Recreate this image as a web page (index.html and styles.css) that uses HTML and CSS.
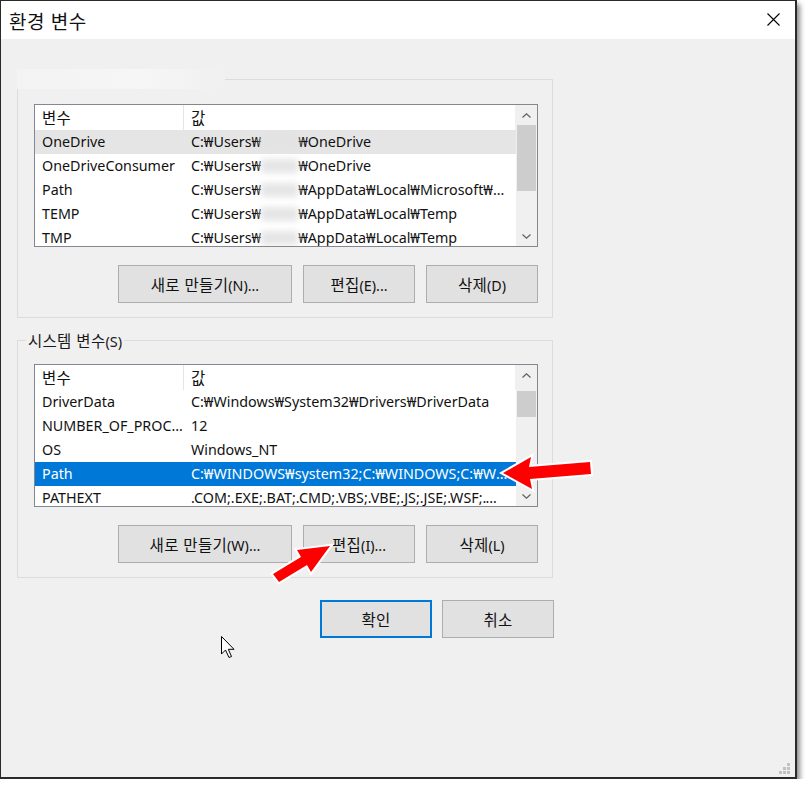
FILE: index.html
```html
<!DOCTYPE html>
<html lang="ko">
<head>
<meta charset="utf-8">
<title>환경 변수</title>
<link rel="stylesheet" href="styles.css">
</head>
<body>
<div class="window">
  <div class="titlebar">
    <span class="title">환경 변수</span>
    <svg class="close" width="13" height="13" viewBox="0 0 13 13"><path d="M0.5 0.5 L12.5 12.5 M12.5 0.5 L0.5 12.5" stroke="#000" stroke-width="1.1" fill="none"/></svg>
  </div>
  <div class="content">
    <div class="group">
      <span class="group-label blank"></span>
      <div class="list">
        <div class="list-main">
          <div class="hdr"><span class="c1 ko">변수</span><span class="c2 ko">값</span></div>
          <div class="row hover"><span class="c1">OneDrive</span><span class="c2">C:₩Users₩<span class="blur"></span>₩OneDrive</span></div>
          <div class="row"><span class="c1">OneDriveConsumer</span><span class="c2">C:₩Users₩<span class="blur"></span>₩OneDrive</span></div>
          <div class="row"><span class="c1">Path</span><span class="c2">C:₩Users₩<span class="blur"></span>₩AppData₩Local₩Microsoft₩WindowsApps;</span></div>
          <div class="row"><span class="c1">TEMP</span><span class="c2">C:₩Users₩<span class="blur"></span>₩AppData₩Local₩Temp</span></div>
          <div class="row"><span class="c1">TMP</span><span class="c2">C:₩Users₩<span class="blur"></span>₩AppData₩Local₩Temp</span></div>
        </div>
        <div class="sb">
          <div class="sb-btn"><svg width="9" height="5" viewBox="0 0 9 5"><path d="M0.5 4.5 L4.5 0.8 L8.5 4.5" stroke="#606060" stroke-width="1.2" fill="none"/></svg></div>
          <div class="sb-track"><div class="thumb thumb-user"></div></div>
          <div class="sb-btn"><svg width="9" height="5" viewBox="0 0 9 5"><path d="M0.5 0.5 L4.5 4.2 L8.5 0.5" stroke="#606060" stroke-width="1.2" fill="none"/></svg></div>
        </div>
      </div>
      <div class="btn-row">
        <button class="btn wide"><span class="ko">새로 만들기</span>(N)...</button>
        <button class="btn"><span class="ko">편집</span>(E)...</button>
        <button class="btn"><span class="ko">삭제</span>(D)</button>
      </div>
    </div>

    <div class="group lower">
      <span class="group-label"><span class="ko">시스템 변수</span>(S)</span>
      <div class="list">
        <div class="list-main">
          <div class="hdr"><span class="c1 ko">변수</span><span class="c2 ko">값</span></div>
          <div class="row"><span class="c1">DriverData</span><span class="c2">C:₩Windows₩System32₩Drivers₩DriverData</span></div>
          <div class="row"><span class="c1">NUMBER_OF_PROCESSORS</span><span class="c2">12</span></div>
          <div class="row"><span class="c1">OS</span><span class="c2">Windows_NT</span></div>
          <div class="row selected"><span class="c1">Path</span><span class="c2">C:₩WINDOWS₩system32;C:₩WINDOWS;C:₩WINDOWS₩System32₩Wbem</span></div>
          <div class="row"><span class="c1">PATHEXT</span><span class="c2">.COM;.EXE;.BAT;.CMD;.VBS;.VBE;.JS;.JSE;.WSF;.WSH;.MSC</span></div>
        </div>
        <div class="sb">
          <div class="sb-btn"><svg width="9" height="5" viewBox="0 0 9 5"><path d="M0.5 4.5 L4.5 0.8 L8.5 4.5" stroke="#606060" stroke-width="1.2" fill="none"/></svg></div>
          <div class="sb-track"><div class="thumb thumb-sys"></div></div>
          <div class="sb-btn"><svg width="9" height="5" viewBox="0 0 9 5"><path d="M0.5 0.5 L4.5 4.2 L8.5 0.5" stroke="#606060" stroke-width="1.2" fill="none"/></svg></div>
        </div>
      </div>
      <div class="btn-row">
        <button class="btn wide"><span class="ko">새로 만들기</span>(W)...</button>
        <button class="btn"><span class="ko">편집</span>(I)...</button>
        <button class="btn"><span class="ko">삭제</span>(L)</button>
      </div>
    </div>

    <div class="dialog-buttons">
      <button class="btn default"><span class="ko">확인</span></button>
      <button class="btn"><span class="ko">취소</span></button>
    </div>
  </div>

  <svg class="grip" width="11" height="11" viewBox="0 0 11 11">
    <rect x="8" y="0" width="3" height="3" fill="#c2c2c2"/>
    <rect x="4" y="4" width="3" height="3" fill="#c2c2c2"/>
    <rect x="8" y="4" width="3" height="3" fill="#c2c2c2"/>
    <rect x="0" y="8" width="3" height="3" fill="#c2c2c2"/>
    <rect x="4" y="8" width="3" height="3" fill="#c2c2c2"/>
    <rect x="8" y="8" width="3" height="3" fill="#c2c2c2"/>
  </svg>

  <svg class="annot" width="808" height="806" viewBox="0 0 808 806">
    <polygon points="503,473 531,457 529,467 590,462 591,474 530,479 532,489" fill="#ff0000" stroke="#fff" stroke-width="4" stroke-linejoin="miter" paint-order="stroke"/>
    <polygon points="330,546 297,550 301,557 273,574 279,582 307,565 311,572" fill="#ff0000" stroke="#fff" stroke-width="4" stroke-linejoin="miter" paint-order="stroke"/>
    <path d="M221.5,636.5 L221.5,654 L225.5,650 L229,657.5 L231.5,656.5 L228.3,649.3 L234,649.3 Z" fill="#fff" stroke="#000" stroke-width="1"/>
  </svg>
</div>
</body>
</html>
```

FILE: styles.css
```css
* { box-sizing: border-box; }

html, body {
  margin: 0;
  padding: 0;
  background: #ffffff;
}

body {
  font-family: "Noto Sans", "Noto Sans CJK KR", sans-serif;
  font-size: 14.3px;
  color: #111;
}

.ko {
  font-family: "Noto Sans CJK KR", sans-serif;
  font-size: 15.5px;
  letter-spacing: 0.3px;
}

.window {
  position: relative;
  width: 797px;
  height: 779px;
  border: 1px solid #2a2a2a;
  border-right-width: 2px;
  border-bottom-width: 2px;
  background: #f0f0f0;
  box-shadow: 3px 4px 5px rgba(0, 0, 0, 0.45);
  display: flex;
  flex-direction: column;
}

.titlebar {
  height: 38px;
  background: #fff;
  display: flex;
  align-items: center;
  justify-content: space-between;
  padding: 0 15px 0 8px;
  flex: none;
}

.title {
  font-family: "Noto Sans CJK KR", sans-serif;
  font-size: 19px;
  letter-spacing: 0.5px;
  line-height: 20px;
  margin-top: 1px;
  color: #111;
}

.close { display: block; margin-top: -1px; }

.content {
  padding: 40px 0 0 16px;
  display: flex;
  flex-direction: column;
}

.group {
  width: 536px;
  border: 1px solid #dcdcdc;
  padding: 0 15px 14px 16px;
  display: flex;
  flex-direction: column;
}

.group.lower { margin-top: 22px; }

.group-label {
  align-self: flex-start;
  margin: -11px 0 0 -8px;
  padding: 0 2px;
  height: 20px;
  line-height: 20px;
  background: #f0f0f0;
  color: #1a1a1a;
  font-size: 14.5px;
}

.group-label.blank {
  width: 208px;
  margin-left: -17px;
  background: linear-gradient(to right, #f3f3f3, #f6f6f6 60%, #f0f0f0);
}

.list {
  margin-top: 15px;
  width: 504px;
  height: 143px;
  border: 1px solid #828790;
  background: #fff;
  display: flex;
  overflow: hidden;
}

.lower .list { margin-top: 14px; }

.list-main {
  flex: 1;
  min-width: 0;
  display: flex;
  flex-direction: column;
}

.hdr, .row {
  display: flex;
  flex: none;
  white-space: nowrap;
}

.hdr { height: 25px; line-height: 24px; }
.row { height: 24px; line-height: 24px; }

.c1 {
  width: 149px;
  flex: none;
  padding-left: 7px;
  padding-right: 1px;
  overflow: hidden;
  text-overflow: ellipsis;
}

.c2 {
  flex: 1;
  min-width: 0;
  padding: 0 8px 0 7px;
  overflow: hidden;
  text-overflow: ellipsis;
}

.hdr .c1 { border-right: 1px solid #e5e5e5; }
.hdr .c2 { border-right: 1px solid #f0f0f0; }

.row.hover { background: #e5e5e5; }
.row.selected { background: #0078d7; color: #fff; }

.blur {
  display: inline-block;
  width: 37px;
  height: 14px;
  vertical-align: -2px;
  background: rgba(226, 226, 226, 0.9);
  filter: blur(3px);
}

.sb {
  width: 21px;
  flex: none;
  background: #f0f0f0;
  display: flex;
  flex-direction: column;
}

.sb-btn {
  height: 20px;
  flex: none;
  display: flex;
  align-items: center;
  justify-content: center;
}

.sb-track {
  flex: 1;
  display: flex;
  flex-direction: column;
}

.thumb {
  margin: 0 1px 0 1px;
  background: #cdcdcd;
}

.thumb-user { height: 66px; }
.thumb-sys { margin-top: 6px; height: 26px; }

.btn-row {
  margin-top: 18px;
  display: flex;
  justify-content: flex-end;
  gap: 11px;
  width: 504px;
}

.btn {
  width: 112px;
  height: 38px;
  border: 1px solid #adadad;
  background: #e1e1e1;
  font-family: "Noto Sans", "Noto Sans CJK KR", sans-serif;
  font-size: 14.3px;
  color: #111;
  padding: 0;
  margin: 0;
}

.btn.wide { width: 174px; }

.dialog-buttons {
  margin-top: 22px;
  width: 537px;
  display: flex;
  justify-content: flex-end;
  gap: 10px;
}

.btn.default { border: 2px solid #0078d7; }

.grip {
  position: absolute;
  right: 5px;
  bottom: 3px;
}

.annot {
  position: absolute;
  left: -1px;
  top: -1px;
  pointer-events: none;
}
```
